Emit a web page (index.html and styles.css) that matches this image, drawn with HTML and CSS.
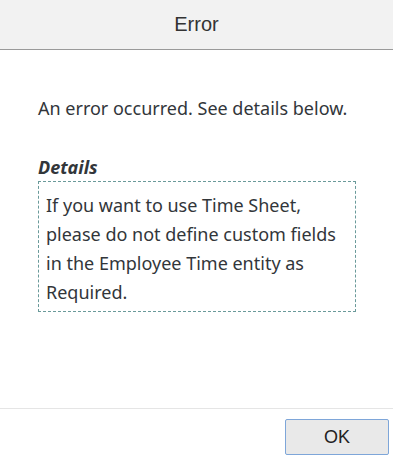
FILE: index.html
```html
<!DOCTYPE html>
<html>
<head>
<meta charset="utf-8">
<link rel="stylesheet" href="styles.css">
</head>
<body>
<div class="dialog">
  <header class="dialog-header">Error</header>
  <main class="dialog-content">
    <p class="message">An error occurred. See details below.</p>
    <div class="details-label">Details</div>
    <div class="details-box">If you want to use Time Sheet, please do not define custom fields in the Employee Time entity as Required.</div>
  </main>
  <footer class="dialog-footer">
    <button class="btn">OK</button>
  </footer>
</div>
</body>
</html>
```
FILE: styles.css
```css
html, body {
  margin: 0;
  padding: 0;
  background: #ffffff;
}
.dialog {
  width: 393px;
  height: 460px;
  display: flex;
  flex-direction: column;
  font-family: "Noto Sans", sans-serif;
  color: #32363a;
}
.dialog-header {
  height: 49px;
  background: #f2f2f2;
  border-bottom: 1px solid #9a9a9a;
  display: flex;
  align-items: center;
  justify-content: center;
  font-family: "Liberation Sans", Arial, sans-serif;
  font-size: 20px;
  color: #333333;
}
.dialog-content {
  flex: 1;
  padding: 0 37px 0 38px;
}
.message {
  margin: 45px 0 0 0;
  font-size: 18px;
  line-height: 26px;
}
.details-label {
  margin-top: 33px;
  font-size: 18px;
  font-weight: bold;
  font-style: italic;
  line-height: 26px;
}
.details-box {
  margin-top: 1px;
  width: 318px;
  box-sizing: border-box;
  border: 1px dashed #6a9a9a;
  padding: 9px 8px 4px 7px;
  font-size: 18px;
  line-height: 29px;
}
.dialog-footer {
  height: 51px;
  border-top: 1px solid #e5e5e5;
  display: flex;
  justify-content: flex-end;
  align-items: flex-start;
  padding-right: 4px;
}
.btn {
  margin-top: 10px;
  width: 104px;
  height: 36px;
  background: #e9e9e9;
  border: 1px solid #7ea6d9;
  border-radius: 2px;
  font-family: "Liberation Sans", Arial, sans-serif;
  font-size: 18px;
  color: #222222;
  padding: 0;
}
```
